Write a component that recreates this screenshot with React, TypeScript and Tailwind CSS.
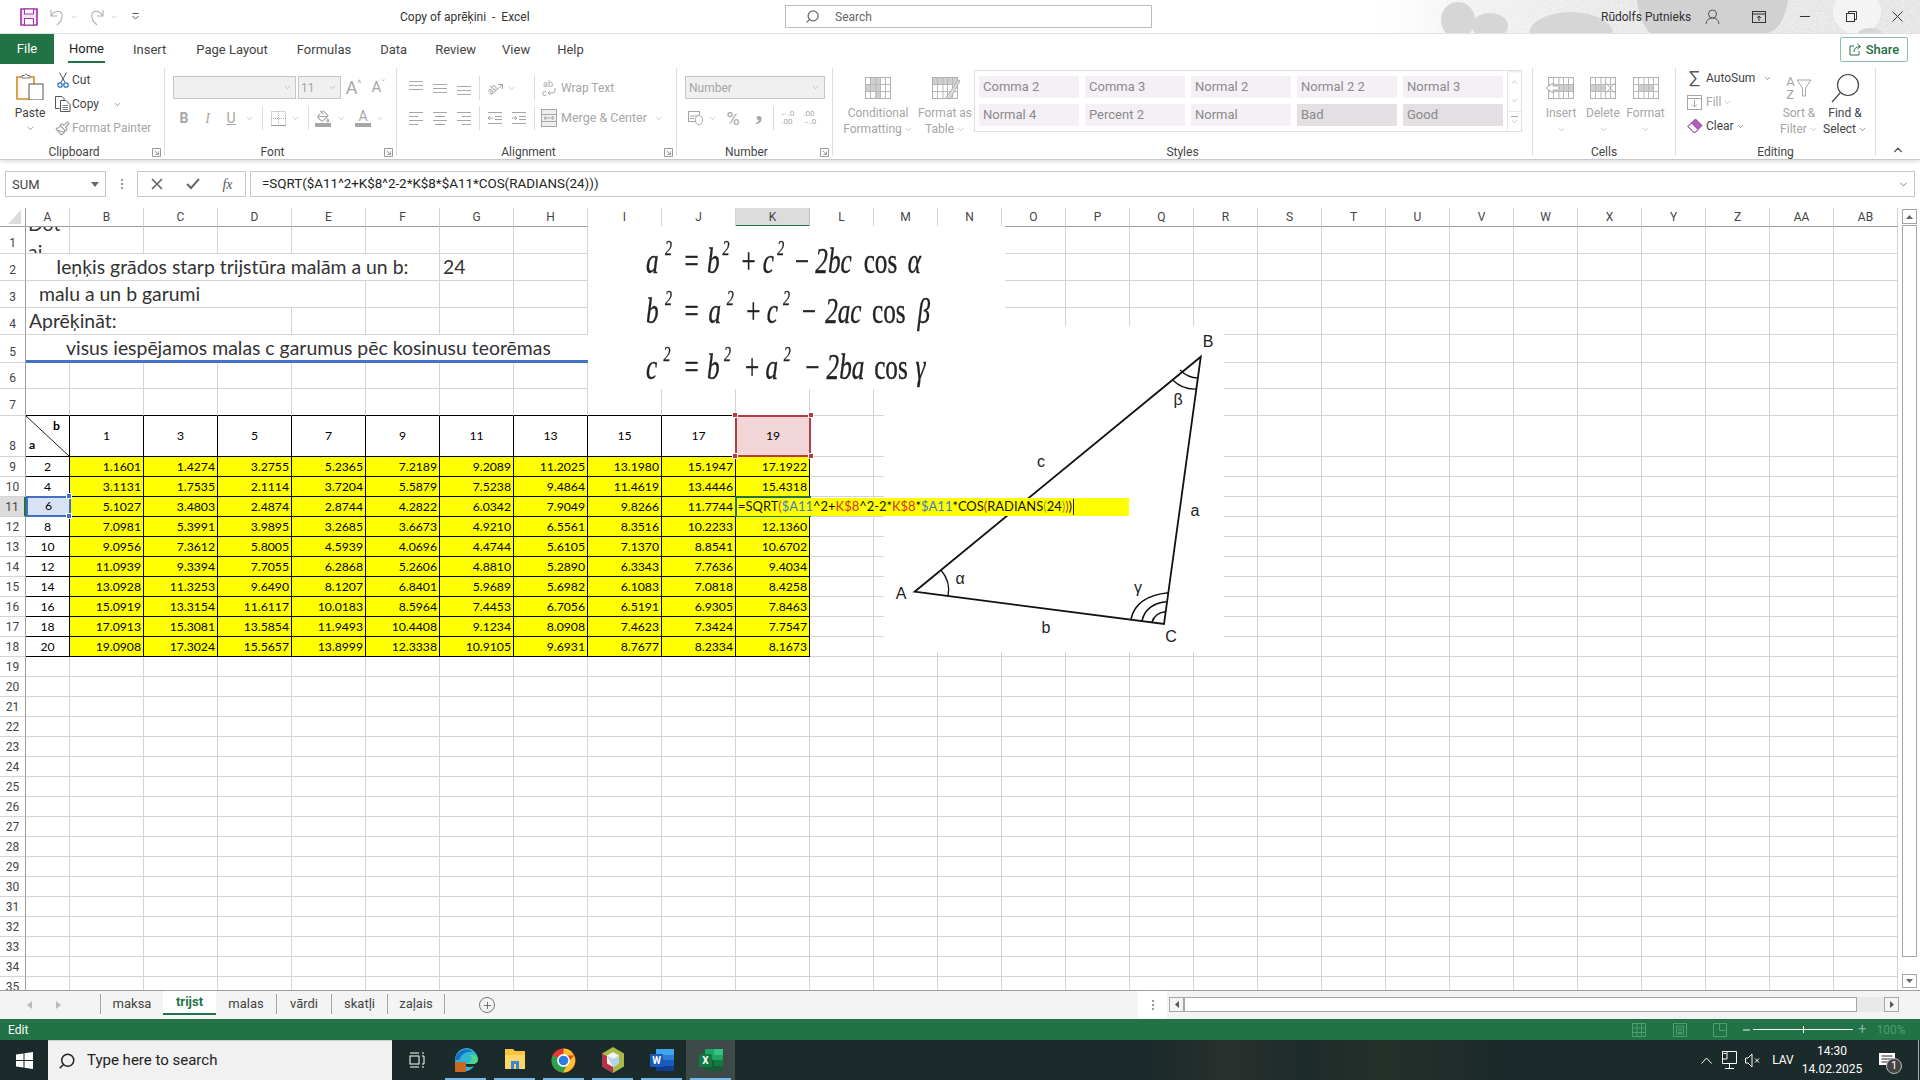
import React from "react";
import { ChevronDown, Paintbrush, PaintBucket, Search, Plus } from "lucide-react";

const G = "#a6a6a6";
const colNames = ["A","B","C","D","E","F","G","H","I","J","K","L","M","N","O","P","Q","R","S","T","U","V","W","X","Y","Z","AA","AB"];
const aVals = [2,4,6,8,10,12,14,16,18,20];
const data: string[][] = [
["1.1601","1.4274","3.2755","5.2365","7.2189","9.2089","11.2025","13.1980","15.1947","17.1922"],
["3.1131","1.7535","2.1114","3.7204","5.5879","7.5238","9.4864","11.4619","13.4446","15.4318"],
["5.1027","3.4803","2.4874","2.8744","4.2822","6.0342","7.9049","9.8266","11.7744",""],
["7.0981","5.3991","3.9895","3.2685","3.6673","4.9210","6.5561","8.3516","10.2233","12.1360"],
["9.0956","7.3612","5.8005","4.5939","4.0696","4.4744","5.6105","7.1370","8.8541","10.6702"],
["11.0939","9.3394","7.7055","6.2868","5.2606","4.8810","5.2890","6.3343","7.7636","9.4034"],
["13.0928","11.3253","9.6490","8.1207","6.8401","5.9689","5.6982","6.1083","7.0818","8.4258"],
["15.0919","13.3154","11.6117","10.0183","8.5964","7.4453","6.7056","6.5191","6.9305","7.8463"],
["17.0913","15.3081","13.5854","11.9493","10.4408","9.1234","8.0908","7.4623","7.3424","7.7547"],
["19.0908","17.3024","15.5657","13.8999","12.3338","10.9105","9.6931","8.7677","8.2334","8.1673"],
];
const heads = [1,3,5,7,9,11,13,15,17,19];

const Slot = ({ w, children, className = "" }: { w: string; children?: React.ReactNode; className?: string }) => (
  <div className={`${w} shrink-0 flex items-center justify-center h-full ${className}`}>{children}</div>
);
const Chev = ({ c = G, s = 9 }: { c?: string; s?: number }) => <ChevronDown size={s} color={c} strokeWidth={1.6} />;
const VSep = () => <div className="w-px h-[24px] bg-[#dcdcdc]" />;

function HLines({ ys, x1s, x2s }: { ys: number[]; x1s: number[]; x2s: number[] }) {
  return (
    <svg width="16" height="16" viewBox="0 0 16 16">
      {ys.map((y, i) => <line key={i} x1={x1s[i]} x2={x2s[i]} y1={y + 0.5} y2={y + 0.5} stroke={G} />)}
    </svg>
  );
}
const f3 = [1, 1, 1];
const t3 = [15, 15, 15];
const y4 = [2, 6, 10, 14];

function GridIcon({ fill, extra }: { fill: [number, number, number, number][]; extra?: React.ReactNode }) {
  return (
    <svg width="32" height="24" viewBox="0 0 32 24">
      {fill.map((f, i) => <rect key={i} x={f[0]} y={f[1]} width={f[2]} height={f[3]} fill="#cfcfcf" />)}
      <rect x="3.5" y="1.5" width="25" height="21" fill="none" stroke="#b0b0b0" />
      {[8, 13.5, 18, 23].map((x) => <line key={x} x1={x + 0.5} x2={x + 0.5} y1="1.5" y2="22.5" stroke="#b8b8b8" />)}
      {[8.5, 15.5].map((y) => <line key={y} x1="3.5" x2="28.5" y1={y} y2={y} stroke="#b8b8b8" />)}
      {extra}
    </svg>
  );
}

function Group({ w, label, launcher, children }: { w: string; label: string; launcher?: boolean; children: React.ReactNode }) {
  return (
    <div className={`${w} shrink-0 relative h-[88px] border-r border-[#dedede]`}>
      <div className="h-[78px] flex">{children}</div>
      <div className={`text-center text-[12px] leading-[12px] text-[#444] whitespace-nowrap ${launcher ? "pr-[16px]" : ""}`}>{label}</div>
      {launcher && (
        <svg className="absolute right-[3px] bottom-[-1px]" width="9" height="9" viewBox="0 0 9 9">
          <path d="M.5 .5H8.5V8.5H.5ZM2.5 2.5L6.5 6.5M6.5 3.5V6.5H3.5" fill="none" stroke="#9a9a9a" />
        </svg>
      )}
    </div>
  );
}

function BigBtn({ w, icon, l1, l2, dark, chevRow }: { w: string; icon: React.ReactNode; l1: string; l2?: string; dark?: boolean; chevRow?: boolean }) {
  const c = dark ? "text-[#444]" : "text-[#a6a6a6]";
  return (
    <div className={`${w} shrink-0 flex flex-col items-center pt-[5px]`}>
      <div className="h-[30px] flex items-center justify-center">{icon}</div>
      <div className={`mt-[2px] h-[16px] leading-[16px] text-[12px] whitespace-nowrap ${c}`}>{l1}</div>
      {chevRow ? (
        <div className="h-[16px] flex items-center"><Chev c={dark ? "#444" : G} /></div>
      ) : (
        <div className={`h-[16px] leading-[16px] text-[12px] whitespace-nowrap flex items-center gap-[2px] ${c}`}>{l2}<Chev c={dark ? "#444" : G} /></div>
      )}
    </div>
  );
}

const StyleItem = ({ t, dark }: { t: string; dark?: boolean }) => (
  <div className={`w-[100px] h-[22px] pl-[4px] flex items-center text-[13px] text-[#8a8a8a] ${dark ? "bg-[#e3dfe3]" : "bg-[#f5f0f6]"}`}>{t}</div>
);

function Ribbon() {
  return (
    <div className="h-[95px] flex pt-[3px] bg-white border-b border-[#c9c9c9] shadow-[0_2px_3px_rgba(0,0,0,0.12)] relative z-10 shrink-0">
      <Group w="w-[165px]" label="Clipboard" launcher>
        <div className="w-[52px] pl-[8px] flex flex-col items-center pt-[5px] shrink-0">
          <svg width="28" height="27" viewBox="0 0 28 27">
            <path d="M1 4H18V26H1Z" fill="#fff" stroke="#d88a1c" strokeWidth="1.6" />
            <path d="M6 5V2.5H8.5L10 .8L11.5 2.5H14V5Z" fill="#fff" stroke="#777" />
            <rect x="13" y="11" width="14" height="16" fill="#fff" stroke="#555" />
          </svg>
          <div className="mt-[5px] text-[12px] leading-[16px] text-[#444]">Paste</div>
          <div className="mt-[3px]"><Chev c="#555" /></div>
        </div>
        <div className="flex flex-col text-[12px] text-[#444]">
          <div className="h-[24px] flex items-center ml-[1px]">
            <Slot w="w-[19px]">
              <svg width="12" height="16" viewBox="0 0 12 16"><path d="M2.5 .5L8 10.5M9.5 .5L4 10.5" stroke="#555" fill="none" /><circle cx="3" cy="13" r="2.2" fill="none" stroke="#2b7cd3" strokeWidth="1.3" /><circle cx="9" cy="13" r="2.2" fill="none" stroke="#2b7cd3" strokeWidth="1.3" /></svg>
            </Slot>
            <span>Cut</span>
          </div>
          <div className="h-[24px] flex items-center ml-[1px]">
            <Slot w="w-[19px]">
              <svg width="16" height="16" viewBox="0 0 16 16"><path d="M4.5 12.5H.5V.5H7L9 2.5V4" fill="none" stroke="#555" /><path d="M5.5 4.5H11L15 8.5V15.5H5.5Z" fill="#fff" stroke="#555" /><path d="M7.5 9.5H13M7.5 11.5H13M7.5 13.5H13" stroke="#777" /></svg>
            </Slot>
            <span className="w-[41px]">Copy</span>
            <Chev c="#555" />
          </div>
          <div className="h-[24px] flex items-center ml-[1px] text-[#a6a6a6]">
            <Slot w="w-[19px]"><Paintbrush size={15} color={G} /></Slot>
            <span>Format Painter</span>
          </div>
        </div>
      </Group>

      <Group w="w-[232px]" label="Font" launcher>
        <div className="pl-[8px] pt-[8px] flex flex-col">
          <div className="flex items-center h-[23px]">
            <div className="w-[123px] h-[23px] bg-[#f0f0f0] border border-[#c6c6c6] flex items-center justify-end pr-[3px]"><Chev /></div>
            <div className="ml-[2px] w-[43px] h-[23px] bg-[#f0f0f0] border border-[#c6c6c6] flex items-center justify-between pl-[2px] pr-[3px] text-[12px] text-[#a6a6a6]">11<Chev /></div>
            <Slot w="w-[25px]" className="text-[18px] text-[#a6a6a6]"><span>A</span><span className="text-[9px] -mt-[8px]">^</span></Slot>
            <Slot w="w-[25px]" className="text-[15px] text-[#a6a6a6]"><span>A</span><span className="text-[9px] -mt-[6px]">ˇ</span></Slot>
          </div>
          <div className="flex h-[20px] mt-[9px] text-[#a6a6a6]">
            <Slot w="w-[22px]" className="font-bold text-[14px]">B</Slot>
            <Slot w="w-[25px]" className="italic text-[14px] [font-family:'Liberation_Serif',serif]">I</Slot>
            <Slot w="w-[22px]" className="underline text-[14px]">U</Slot>
            <Slot w="w-[14px]"><Chev /></Slot>
            <Slot w="w-[12px]"><VSep /></Slot>
            <Slot w="w-[20px]">
              <svg width="15" height="15" viewBox="0 0 15 15"><rect x=".5" y=".5" width="14" height="14" fill="none" stroke="#aaa" strokeDasharray="1 1" /><path d="M7.5 0V15M0 7.5H15" stroke="#aaa" strokeDasharray="1 1" /><path d="M0 14.5H15" stroke="#999" /></svg>
            </Slot>
            <Slot w="w-[14px]"><Chev /></Slot>
            <Slot w="w-[12px]"><VSep /></Slot>
            <Slot w="w-[18px]">
              <div className="flex flex-col items-center"><PaintBucket size={13} color={G} /><div className="w-[16px] h-[4px] bg-[#a6a6a6]" /></div>
            </Slot>
            <Slot w="w-[18px]"><Chev /></Slot>
            <Slot w="w-[26px]">
              <div className="flex flex-col items-center leading-[13px] text-[14px]">A<div className="w-[16px] h-[4px] bg-[#a6a6a6]" /></div>
            </Slot>
            <Slot w="w-[8px]"><Chev /></Slot>
          </div>
        </div>
      </Group>

      <Group w="w-[280px]" label="Alignment" launcher>
        <div className="pl-[7px] pt-[10px] flex flex-col">
          <div className="flex h-[20px]">
            <Slot w="w-[24px]"><HLines ys={[1, 5, 9]} x1s={f3} x2s={t3} /></Slot>
            <Slot w="w-[24px]"><HLines ys={[4, 8, 12]} x1s={f3} x2s={t3} /></Slot>
            <Slot w="w-[24px]"><HLines ys={[6, 10, 14]} x1s={f3} x2s={t3} /></Slot>
            <Slot w="w-[7px]"><VSep /></Slot>
            <Slot w="w-[24px]">
              <svg width="17" height="15" viewBox="0 0 17 15"><text x="0" y="11" fontSize="9" fill={G} transform="rotate(-45 5 8)" fontFamily="Roboto">ab</text><path d="M4 14L15 4M11 3.5H15.5V8" stroke={G} fill="none" /></svg>
            </Slot>
            <Slot w="w-[24px]" className="justify-start"><Chev /></Slot>
            <Slot w="w-[6px]"><VSep /></Slot>
            <Slot w="w-[24px]">
              <svg width="15" height="18" viewBox="0 0 15 18"><text x="1" y="8" fontSize="9" fill={G} fontFamily="Roboto">ab</text><text x="0" y="17" fontSize="9" fill={G} fontFamily="Roboto">c</text><path d="M13 9V11.5Q13 14 10 14H6M8 12L6 14L8 16" fill="none" stroke={G} /></svg>
            </Slot>
            <span className="text-[12px] leading-[20px] text-[#a6a6a6]">Wrap Text</span>
          </div>
          <div className="flex h-[20px] mt-[10px]">
            <Slot w="w-[24px]"><HLines ys={y4} x1s={[1, 1, 1, 1]} x2s={[15, 10, 15, 10]} /></Slot>
            <Slot w="w-[24px]"><HLines ys={y4} x1s={[1, 3, 1, 3]} x2s={[15, 13, 15, 13]} /></Slot>
            <Slot w="w-[24px]"><HLines ys={y4} x1s={[1, 6, 1, 6]} x2s={[15, 15, 15, 15]} /></Slot>
            <Slot w="w-[7px]"><VSep /></Slot>
            <Slot w="w-[24px]">
              <svg width="16" height="16" viewBox="0 0 16 16"><path d="M1 2.5H15M8 6.5H15M8 9.5H15M1 13.5H15M6 8H1M3 6L1 8L3 10" stroke={G} fill="none" /></svg>
            </Slot>
            <Slot w="w-[24px]">
              <svg width="16" height="16" viewBox="0 0 16 16"><path d="M1 2.5H15M8 6.5H15M8 9.5H15M1 13.5H15M1 8H6M4 6L6 8L4 10" stroke={G} fill="none" /></svg>
            </Slot>
            <Slot w="w-[6px]"><VSep /></Slot>
            <Slot w="w-[24px]">
              <svg width="16" height="18" viewBox="0 0 16 18"><rect x=".5" y=".5" width="15" height="17" fill="#eee" stroke={G} /><path d="M0 5.5H16M0 12.5H16M3 9H13M5 7L3 9L5 11M11 7L13 9L11 11" stroke={G} fill="none" /></svg>
            </Slot>
            <span className="w-[91px] text-[12.5px] leading-[20px] text-[#a6a6a6] whitespace-nowrap">Merge &amp; Center</span>
            <Slot w="w-[12px]"><Chev /></Slot>
          </div>
        </div>
      </Group>

      <Group w="w-[156px]" label="Number" launcher>
        <div className="pl-[8px] pt-[8px] flex flex-col">
          <div className="w-[140px] h-[23px] bg-[#f0f0f0] border border-[#c6c6c6] flex items-center justify-between pl-[3px] pr-[4px] text-[12px] text-[#a6a6a6]">Number<Chev /></div>
          <div className="flex h-[20px] mt-[9px] text-[#a6a6a6]">
            <Slot w="w-[22px]" className="ml-[-1px]">
              <svg width="15" height="14" viewBox="0 0 15 14"><rect x=".5" y=".5" width="11" height="10" fill="none" stroke={G} /><path d="M2 5H10M2 7.5H6" stroke={G} /><ellipse cx="11" cy="9" rx="3.5" ry="4.5" fill="#fff" stroke={G} /></svg>
            </Slot>
            <Slot w="w-[12px]"><Chev /></Slot>
            <Slot w="w-[30px]" className="text-[18px]">%</Slot>
            <Slot w="w-[22px]" className="text-[28px] font-bold leading-none [font-family:'Liberation_Serif',serif]"><span className="-mt-[14px]">,</span></Slot>
            <Slot w="w-[6px]"><VSep /></Slot>
            <Slot w="w-[22px]" className="flex-col text-[8px] leading-[8px]"><span>←.0</span><span>.00</span></Slot>
            <Slot w="w-[22px]" className="flex-col text-[8px] leading-[8px]"><span>.00</span><span>→.0</span></Slot>
          </div>
        </div>
      </Group>

      <Group w="w-[700px]" label="Styles">
        <div className="flex w-full">
          <BigBtn w="w-[74px] ml-[8px]" l1="Conditional" l2="Formatting" icon={<GridIcon fill={[[8, 2, 10, 7], [4, 9, 14, 6], [13, 15, 5, 7]]} />} />
          <BigBtn w="w-[60px]" l1="Format as" l2="Table" icon={<GridIcon fill={[[4, 2, 24, 6]]} extra={<path d="M17 22L29 4L31 5L21 23Z" fill="#ddd" stroke="#aaa" />} />} />
          <div className="ml-[-1px] mt-[2px] w-[548px] h-[62px] border border-[#e0e0e0] flex">
            <div className="pl-[4px] pt-[5px] grid grid-cols-[repeat(5,100px)] gap-x-[6px] gap-y-[6px] w-[532px] content-start">
              <StyleItem t="Comma 2" /><StyleItem t="Comma 3" /><StyleItem t="Normal 2" /><StyleItem t="Normal 2 2" /><StyleItem t="Normal 3" />
              <StyleItem t="Normal 4" /><StyleItem t="Percent 2" /><StyleItem t="Normal" /><StyleItem t="Bad" dark /><StyleItem t="Good" dark />
            </div>
            <div className="flex-1 flex flex-col border-l border-[#e6e6e6]">
              <div className="flex-1 flex items-center justify-center border-b border-[#e6e6e6] rotate-180"><Chev /></div>
              <div className="flex-1 flex items-center justify-center border-b border-[#e6e6e6]"><Chev /></div>
              <div className="flex-1 flex flex-col items-center justify-center"><div className="w-[7px] h-px bg-[#a6a6a6]" /><Chev /></div>
            </div>
          </div>
        </div>
      </Group>

      <Group w="w-[143px]" label="Cells">
        <div className="flex pl-[7px]">
          <BigBtn chevRow w="w-[42px]" l1="Insert" icon={<GridIcon fill={[[10, 8, 18, 8]]} extra={<path d="M1 12L8 7V10H14V14H8V17Z" fill="#fff" stroke="#b0b0b0" />} />} />
          <BigBtn chevRow w="w-[42px]" l1="Delete" icon={<GridIcon fill={[[4, 8, 14, 8]]} extra={<path d="M18 6L29 18M29 6L18 18" stroke="#b0b0b0" />} />} />
          <BigBtn chevRow w="w-[43px]" l1="Format" icon={<GridIcon fill={[[8, 8, 15, 8]]} />} />
        </div>
      </Group>

      <Group w="w-[200px]" label="Editing">
        <div className="flex pl-[11px]">
          <div className="w-[95px] flex flex-col text-[12px]">
            <div className="h-[24px] mt-[-2px] flex items-center text-[#444]">
              <span className="w-[19px] pl-[2px] text-[18px] text-[#555] leading-none">∑</span><span className="w-[57px]">AutoSum</span><Chev c="#555" />
            </div>
            <div className="h-[24px] flex items-center text-[#a6a6a6]">
              <Slot w="w-[19px]" className="justify-start"><svg width="15" height="15" viewBox="0 0 15 15"><rect x=".5" y=".5" width="14" height="14" fill="none" stroke={G} /><path d="M0 3.5H15M7.5 5V12M5 9.5L7.5 12L10 9.5" fill="none" stroke={G} /></svg></Slot>
              <span className="mr-[2px]">Fill</span><Chev />
            </div>
            <div className="h-[24px] flex items-center text-[#444]">
              <Slot w="w-[19px]" className="justify-start"><svg width="16" height="16" viewBox="0 0 16 16"><path d="M8.5 1L15 7.5L7.5 15L1 8.5Z" fill="#b55bc0" stroke="#8e3a9a" /><path d="M4.5 5L11 11.5L7.5 15L1 8.5Z" fill="#fff" stroke="#8e3a9a" /></svg></Slot>
              <span className="mr-[2px]">Clear</span><Chev c="#555" />
            </div>
          </div>
          <BigBtn w="w-[44px] ml-[-5px]" l1="Sort &" l2="Filter" icon={
            <div className="flex items-center gap-[1px]">
              <div className="flex flex-col text-[13px] leading-[13px] text-[#a6a6a6]"><span>A</span><span>Z</span></div>
              <svg width="16" height="18" viewBox="0 0 16 18"><path d="M1 1H15L9.5 9V17H6.5V9Z" fill="none" stroke={G} /></svg>
            </div>} />
          <BigBtn dark w="w-[48px]" l1="Find &" l2="Select" icon={
            <svg width="30" height="30" viewBox="0 0 30 30"><circle cx="18" cy="12" r="10.5" fill="none" stroke="#444" strokeWidth="1.2" /><path d="M10.5 19.5L2 29" stroke="#444" strokeWidth="1.2" /></svg>} />
        </div>
      </Group>
      <div className="flex-1 flex items-end justify-center pb-[2px]">
        <ChevronDown size={14} color="#555" className="rotate-180" />
      </div>
    </div>
  );
}

function TitleBar() {
  return (
    <div className="h-[34px] flex items-center bg-white border-b border-[#e1e1e1] relative shrink-0">
      <svg className="absolute right-0 top-0" width="560" height="33" viewBox="1360 0 560 33">
        <defs>
          <linearGradient id="fade" x1="0" x2="1" y1="0" y2="0"><stop offset="0" stopColor="#fff" /><stop offset="0.2" stopColor="#f0f0f0" /><stop offset="0.45" stopColor="#e6e6e6" /><stop offset="1" stopColor="#e2e2e2" /></linearGradient>
          <filter id="speck" x="0" y="0" width="100%" height="100%">
            <feTurbulence type="fractalNoise" baseFrequency="0.9" numOctaves="2" />
            <feColorMatrix values="0 0 0 0 1 0 0 0 0 1 0 0 0 0 1 0 0 0 3 -1.2" />
          </filter>
          <linearGradient id="wash" x1="0" x2="1" y1="0" y2="0"><stop offset="0" stopColor="#fff" stopOpacity="1" /><stop offset="0.16" stopColor="#fff" stopOpacity="0" /></linearGradient>
        </defs>
        <rect x="1360" width="560" height="33" fill="url(#fade)" />
        <rect x="1360" width="560" height="33" filter="url(#speck)" opacity="0.55" />
        <rect x="1360" width="560" height="33" fill="url(#wash)" />
        <ellipse cx="1458" cy="20" rx="17" ry="18" fill="#d6d6d6" />
        <ellipse cx="1490" cy="26" rx="18" ry="13" fill="#d6d6d6" />
        <ellipse cx="1571" cy="34" rx="42" ry="22" fill="#d6d6d6" />
        <path d="M1637 0H1788C1786 14 1780 30 1768 33H1650C1642 24 1638 12 1637 0Z" fill="#d1d1d1" />
        <ellipse cx="1857" cy="12" rx="24" ry="22" fill="#f4f4f4" />
        <ellipse cx="1870" cy="34" rx="12" ry="6" fill="#d6d6d6" />
      </svg>
      <Slot w="w-[20px] ml-[19px]" className="relative">
        <svg width="18" height="18" viewBox="0 0 18 18"><path d="M1 1H17V17H1Z" fill="#f5e5f6" stroke="#a33ba8" strokeWidth="1.7" /><rect x="4.5" y="1" width="9" height="5" fill="#fff" stroke="#a33ba8" /><rect x="4.5" y="10.5" width="9" height="6.5" fill="#fff" stroke="#a33ba8" /></svg>
      </Slot>
      <Slot w="w-[20px] ml-[9px]">
        <svg width="18" height="18" viewBox="0 0 18 18"><path d="M2 2V8H8M2 8Q6 2 10.5 3.5T12 13L8 17" fill="none" stroke="#b0b0b0" strokeWidth="1.1" /></svg>
      </Slot>
      <Slot w="w-[12px]"><Chev c="#b0b0b0" s={8} /></Slot>
      <Slot w="w-[20px] ml-[6px]">
        <svg width="18" height="18" viewBox="0 0 18 18"><path d="M16 2V8H10M16 8Q12 2 7.5 3.5T6 13L10 17" fill="none" stroke="#b0b0b0" strokeWidth="1.1" /></svg>
      </Slot>
      <Slot w="w-[12px] ml-[2px]"><Chev c="#b0b0b0" s={8} /></Slot>
      <Slot w="w-[14px] ml-[8px]">
        <svg width="9" height="9" viewBox="0 0 9 9"><path d="M1.5 1.5H7.5M1.5 4L4.5 7L7.5 4" fill="none" stroke="#555" /></svg>
      </Slot>
      <div className="ml-[258px] w-[130px] text-[12px] text-[#333] whitespace-pre relative">Copy of aprēķini  -  Excel</div>
      <div className="ml-[255px] w-[367px] h-[23px] border border-[#bdbdbd] bg-white flex items-center pl-[19px] text-[12px] text-[#666] relative">
        <Search size={15} color="#666" className="-scale-x-100" />
        <span className="ml-[15px]">Search</span>
      </div>
      <div className="ml-[449px] w-[88px] text-[12px] text-[#333] whitespace-nowrap relative">Rūdolfs Putnieks</div>
      <Slot w="w-[24px] ml-[11px]" className="relative">
        <svg width="15" height="15" viewBox="0 0 15 15"><circle cx="7.5" cy="5" r="4" fill="none" stroke="#555" /><path d="M1 15Q1.5 9 7.5 9T14 15" fill="none" stroke="#555" /></svg>
      </Slot>
      <Slot w="w-[24px] ml-[23px]" className="relative">
        <svg width="14" height="12" viewBox="0 0 14 12"><rect x=".5" y=".5" width="13" height="11" fill="none" stroke="#333" /><path d="M0 3H14M7 10V5M5 7L7 5L9 7" fill="none" stroke="#333" /></svg>
      </Slot>
      <Slot w="w-[24px] ml-[22px]" className="relative"><div className="w-[10px] h-px bg-[#333]" /></Slot>
      <Slot w="w-[24px] ml-[22px]" className="relative">
        <svg width="11" height="11" viewBox="0 0 11 11"><rect x=".5" y="2.5" width="8" height="8" fill="none" stroke="#333" /><path d="M2.5 2.5V.5H10.5V8.5H8.5" fill="none" stroke="#333" /></svg>
      </Slot>
      <Slot w="w-[24px] ml-[22px]" className="relative">
        <svg width="11" height="11" viewBox="0 0 11 11"><path d="M.5 .5L10.5 10.5M10.5 .5L.5 10.5" stroke="#333" /></svg>
      </Slot>
    </div>
  );
}

function Tabs() {
  const items: [string, string][] = [["Insert", "ml-[28px]"], ["Page Layout", "ml-[30px]"], ["Formulas", "ml-[29px]"], ["Data", "ml-[29px]"], ["Review", "ml-[28px]"], ["View", "ml-[26px]"], ["Help", "ml-[27px]"]];
  return (
    <div className="h-[31px] flex bg-white shrink-0 text-[13px] text-[#444]">
      <div className="w-[54px] h-[30px] bg-[#217346] text-white flex items-center justify-center">File</div>
      <div className="ml-[14px] h-[28px] w-[37px] border-b-2 border-[#217346] flex items-center justify-center text-[#222] mt-[1px] pt-[1px]">Home</div>
      {items.map(([t, m]) => <div key={t} className={`${m} h-[30px] pt-[2px] flex items-center whitespace-nowrap`}>{t}</div>)}
      <div className="ml-auto mr-[12px] mt-[3px] w-[68px] h-[25px] border border-[#8fc0a6] rounded-[2px] flex items-center justify-center gap-[4px] text-[#217346] font-medium">
        <svg width="13" height="13" viewBox="0 0 13 13"><path d="M5 3H1V12H10V8M5 9Q5 4 11 3.5M8.5 1L11.5 3.5L8.5 6" fill="none" stroke="#217346" /></svg>
        Share
      </div>
    </div>
  );
}

function FormulaBar() {
  return (
    <div className="h-[26px] mt-[11px] mb-[11px] flex shrink-0 text-[13px] text-[#444]">
      <div className="ml-[5px] w-[101px] border border-[#c6c6c6] flex items-center justify-between pl-[6px] pr-[6px] pt-[1px]">
        SUM
        <svg width="8" height="5" viewBox="0 0 8 5"><path d="M0 0H8L4 5Z" fill="#666" /></svg>
      </div>
      <div className="w-[31px] flex flex-col items-center justify-center gap-[2px]">
        <div className="w-[2px] h-[2px] bg-[#999]" /><div className="w-[2px] h-[2px] bg-[#999]" /><div className="w-[2px] h-[2px] bg-[#999]" />
      </div>
      <div className="w-[109px] border border-[#c6c6c6] flex items-center">
        <Slot w="w-[37px]"><svg width="12" height="12" viewBox="0 0 12 12"><path d="M1 1L11 11M11 1L1 11" stroke="#666" strokeWidth="1.7" /></svg></Slot>
        <Slot w="w-[35px]"><svg width="14" height="12" viewBox="0 0 14 12"><path d="M1 6L5 10L13 1" fill="none" stroke="#666" strokeWidth="1.9" /></svg></Slot>
        <Slot w="w-[35px]"><span className="italic text-[14px] [font-family:'Liberation_Serif',serif] text-[#555]">fx</span></Slot>
      </div>
      <div className="ml-[4px] w-[1665px] border border-[#c6c6c6] flex items-center pl-[11px] pr-[5px] pt-[1px] text-[13.4px] text-[#222] justify-between">
        <span>=SQRT($A11^2+K$8^2-2*K$8*$A11*COS(RADIANS(24)))</span>
        <Chev c="#555" s={11} />
      </div>
    </div>
  );
}

const S = "relative -top-[18px] text-[20px]";
const eqs: [string, string][][] = [
  [["a", ""], ["2", `${S} ml-[9px]`], ["=", "not-italic ml-[18px]"], ["b", "ml-[12px]"], ["2", `${S} ml-[4px]`], ["+", "not-italic ml-[17px]"], ["c", "ml-[10px]"], ["2", `${S} ml-[5px]`], ["−", "not-italic ml-[15px]"], ["2bc", "ml-[9px]"], ["cos", "not-italic ml-[17px]"], ["α", "ml-[15px]"]],
  [["b", ""], ["2", `${S} ml-[9px]`], ["=", "not-italic ml-[18px]"], ["a", "ml-[14px]"], ["2", `${S} ml-[8px]`], ["+", "not-italic ml-[18px]"], ["c", "ml-[9px]"], ["2", `${S} ml-[7px]`], ["−", "not-italic ml-[17px]"], ["2ac", "ml-[13px]"], ["cos", "not-italic ml-[15px]"], ["β", "ml-[17px]"]],
  [["c", ""], ["2", `${S} ml-[9px]`], ["=", "not-italic ml-[20px]"], ["b", "ml-[12px]"], ["2", `${S} ml-[6px]`], ["+", "not-italic ml-[20px]"], ["a", "ml-[9px]"], ["2", `${S} ml-[8px]`], ["−", "not-italic ml-[21px]"], ["2ba", "ml-[10px]"], ["cos", "not-italic ml-[14px]"], ["γ", "ml-[11px]"]],
];
const eqMargins = ["", "mt-[10px]", "mt-[16px]"];

const hdr = "flex items-center justify-center text-[12px] text-[#444] bg-white border-r border-b";
function Sheet() {
  const cells: React.ReactNode[] = [];
  cells.push(
    <div key="corner" className="bg-white border-r border-b border-[#9e9e9e] flex items-center justify-end pr-[4px]">
      <svg width="13" height="14" viewBox="0 0 13 14"><path d="M13 0V14H0Z" fill="#dcdcdc" /></svg>
    </div>
  );
  colNames.forEach((n, i) => {
    const sel = n === "K";
    const isKborder = sel ? "border-b-2 border-b-[#217346] border-r-[#c0c0c0]" : "border-b-[#9e9e9e] border-r-[#d4d4d4]";
    cells.push(<div key={"h" + i} className={`${hdr} ${isKborder} ${sel ? "!bg-[#dcdcdc]" : ""}`}>{n}</div>);
  });
  const grid = "border-r border-b border-[#d4d4d4]";
  for (let r = 1; r <= 35; r++) {
    cells.push(
      <div key={"r" + r} className={`flex ${r <= 8 ? "items-end pb-[1px]" : "items-center pt-[1px]"} justify-center text-[12px] text-[#444] border-r border-b border-r-[#9e9e9e] border-b-[#d4d4d4] ${r === 11 ? "bg-[#dcdcdc] !border-r-2 !border-r-[#217346]" : "bg-white"}`}>{r}</div>
    );
    const big = "[font-family:Lato,sans-serif] text-[19.4px] text-[#333] whitespace-nowrap flex items-center";
    let start = 0;
    if (r === 1) {
      cells.push(
        <div key="a1" className={`${grid} overflow-hidden pl-[2px] [font-family:Lato,sans-serif] text-[19.4px] text-[#333] leading-[24px]`}>
          <div className="-mt-[15px]">Dot</div>
          <div className="mt-[4px]">ai</div>
        </div>
      );
      start = 1;
    }
    if (r === 2) {
      cells.push(<div key="m2" className={`col-span-6 ${grid} ${big} pl-[30px]`}>Ieņķis grādos starp trijstūra malām a un b:</div>);
      cells.push(<div key="g2" className={`${grid} ${big} pl-[3px]`}>24</div>);
      start = 7;
    }
    if (r === 3) {
      cells.push(<div key="m3" className={`col-span-5 ${grid} ${big} pl-[13px]`}>malu a un b garumi</div>);
      start = 5;
    }
    if (r === 4) {
      cells.push(<div key="m4" className={`col-span-4 ${grid} ${big} pl-[3px]`}>Aprēķināt:</div>);
      start = 4;
    }
    if (r === 5) {
      cells.push(<div key="m5" className={`col-span-8 ${big} pl-[40px] border-b-[3px] border-b-[#4472c4]`}>visus iespējamos malas c garumus pēc kosinusu teorēmas</div>);
      start = 8;
    }
    for (let c = start; c < colNames.length; c++) {
      const k = `c${r}-${c}`;
      const num = "[font-family:Lato,sans-serif] text-[12.2px] text-black pt-[1px]";
      if (r === 7 && c <= 10) {
        cells.push(<div key={k} className="border-r border-r-[#d4d4d4] border-b border-b-black" />);
      } else if (r === 8 && c === 0) {
        cells.push(
          <div key={k} className={`relative border-r border-b border-black ${num} font-bold`}>
            <svg className="absolute inset-0" width="43" height="40" viewBox="0 0 43 40"><line x1="0" y1="0" x2="43" y2="40" stroke="#222" /></svg>
            <span className="absolute right-[9px] top-[1px]">b</span>
            <span className="absolute left-[3px] bottom-[2px]">a</span>
          </div>
        );
      } else if (r === 8 && c <= 10) {
        cells.push(<div key={k} className={`border-r border-b border-black flex items-center justify-center ${num}`}>{heads[c - 1]}</div>);
      } else if (r >= 9 && r <= 18 && c === 0) {
        cells.push(<div key={k} className={`border-r border-b border-black flex items-center justify-center ${num}`}>{aVals[r - 9]}</div>);
      } else if (r >= 9 && r <= 18 && c <= 10) {
        cells.push(<div key={k} className={`bg-[#ffff00] border-r border-b border-black flex items-center justify-end pr-[2px] ${num}`}>{data[r - 9][c - 1]}</div>);
      } else {
        cells.push(<div key={k} className={grid} />);
      }
    }
  }
  const handle = "absolute w-[6px] h-[6px] border border-white";
  return (
    <div className="flex h-[783px] shrink-0 border-b border-[#9e9e9e]">
      <div className="relative w-[1898px] h-[782px] overflow-hidden">
        <div className="grid grid-cols-[26px_44px_repeat(10,74px)_repeat(17,64px)] grid-rows-[19px_repeat(4,27px)_28px_26px_27px_41px_repeat(27,20px)]">
          {cells}
        </div>

        {/* triangle picture */}
        <svg className="absolute left-[884px] top-[118px] bg-white" width="340" height="326" viewBox="884 326 340 326">
          <path d="M914.6 591.7L1200.8 356.7L1164 624Z" fill="none" stroke="#111" strokeWidth="1.8" />
          <path d="M941 570Q951 582 948 596" fill="none" stroke="#111" strokeWidth="1.3" />
          <path d="M1180 370Q1188 378 1198 378M1172.6 380Q1183 390 1196.6 389" fill="none" stroke="#111" strokeWidth="1.3" />
          <path d="M1131 619Q1136 596 1168.4 592.7M1142 620.7Q1146 604 1166 601.7M1152 622Q1155 613 1165 611.7" fill="none" stroke="#111" strokeWidth="1.6" />
          <g fontFamily="Liberation Sans, sans-serif" fontSize="16" fill="#222" textAnchor="middle">
            <text x="1208" y="347">B</text>
            <text x="901" y="599">A</text>
            <text x="1171" y="642">C</text>
            <text x="1195" y="516">a</text>
            <text x="1046" y="633">b</text>
            <text x="1041" y="467">c</text>
            <text x="960" y="584">α</text>
            <text x="1178" y="405">β</text>
            <text x="1138" y="593">γ</text>
          </g>
        </svg>

        {/* formula picture */}
        <div className="absolute left-[588px] top-[18px] w-[417px] h-[163px] bg-white pl-[58px] pt-[15px] [font-family:'Liberation_Serif',serif] italic text-[#222] whitespace-nowrap [-webkit-text-stroke:0.35px_#222]">
          {eqs.map((line, i) => (
            <div key={i} className={`${eqMargins[i]} flex items-baseline h-[40px] leading-[40px] text-[36px] origin-left scale-x-[0.7] w-[440px]`}>
              {line.map(([t, cl], j) => <span key={j} className={cl}>{t}</span>)}
            </div>
          ))}
        </div>

        {/* K8 reference highlight */}
        <div className="absolute left-[735px] top-[207px] w-[76px] h-[42px] border-2 border-[#b83a45] bg-[#f2d6d8] flex items-center justify-center [font-family:Lato,sans-serif] text-[12.2px] text-black">19</div>
        <div className={`${handle} bg-[#b83a45] left-[732px] top-[204px]`} />
        <div className={`${handle} bg-[#b83a45] left-[808px] top-[204px]`} />
        <div className={`${handle} bg-[#b83a45] left-[732px] top-[245px]`} />
        <div className={`${handle} bg-[#b83a45] left-[808px] top-[245px]`} />

        {/* A11 reference highlight */}
        <div className="absolute left-[26px] top-[288px] w-[45px] h-[21px] border-2 border-[#3f6fc6] bg-[#d9e2f3] flex items-center justify-center [font-family:Lato,sans-serif] text-[12.2px] text-black">6</div>
        <div className={`${handle} bg-[#3f6fc6] left-[66px] top-[285px]`} />
        <div className={`${handle} bg-[#3f6fc6] left-[66px] top-[305px]`} />

        {/* active cell frame, then the in-cell editor that spills over its right edge */}
        <div className="absolute left-[735px] top-[288px] w-[76px] h-[21px] border-2 border-[#217346]" />
        <div className="absolute left-[737px] top-[290px] w-[392px] h-[18px] bg-[#ffff00] pl-[1px] flex items-center [font-family:Lato,sans-serif] text-[12.95px] text-[#111] whitespace-nowrap">
          <span>=SQRT</span><span className="text-[#c0392b]">(</span><span className="text-[#3d7cc4]">$A11</span><span>^2+</span><span className="text-[#d0342c]">K$8</span><span>^2-2*</span><span className="text-[#d0342c]">K$8</span><span>*</span><span className="text-[#3d7cc4]">$A11</span><span>*COS</span><span className="text-[#c0392b]">(</span><span>RADIANS</span><span className="text-[#a3a300]">(</span><span>24</span><span className="text-[#a3a300]">)</span><span className="text-[#c0392b]">)</span><span>)</span>
          <span className="w-px h-[16px] bg-[#222] ml-[1px]" />
        </div>
      </div>

      <div className="w-[22px] pl-[4px] flex flex-col bg-white">
        <div className="mt-[1px] w-[15px] h-[15px] border border-[#a6a6a6] flex items-center justify-center">
          <svg width="7" height="4" viewBox="0 0 7 4"><path d="M0 4H7L3.5 0Z" fill="#666" /></svg>
        </div>
        <div className="mt-px w-[15px] h-[732px] border border-[#a6a6a6] bg-white" />
        <div className="mt-[17px] w-[15px] h-[14px] border border-[#a6a6a6] flex items-center justify-center">
          <svg width="7" height="4" viewBox="0 0 7 4"><path d="M0 0H7L3.5 4Z" fill="#666" /></svg>
        </div>
      </div>
    </div>
  );
}

function SheetTabs() {
  const Tab = ({ t, w }: { t: string; w: string }) => (
    <div className={`${w} h-[20px] mt-[3px] border-r border-[#a6a6a6] flex items-center justify-center whitespace-nowrap text-[#444]`}>{t}</div>
  );
  return (
    <div className="h-[28px] bg-[#f4f4f4] flex text-[13px] shrink-0">
      <div className="w-[101px] h-full flex border-r-0 relative">
        <Slot w="w-[14px] ml-[22px]"><svg width="5" height="8" viewBox="0 0 5 8"><path d="M5 0V8L0 4Z" fill="#bbb" /></svg></Slot>
        <Slot w="w-[14px] ml-[15px]"><svg width="5" height="8" viewBox="0 0 5 8"><path d="M0 0V8L5 4Z" fill="#bbb" /></svg></Slot>
        <div className="absolute right-0 top-[3px] h-[20px] w-px bg-[#a6a6a6]" />
      </div>
      <div className="w-[62px] h-[20px] mt-[3px] flex items-center justify-center text-[#444]">maksa</div>
      <div className="w-[53px] h-[24px] bg-white border-b-2 border-[#217346] flex items-center justify-center font-bold text-[#217346]">trijst</div>
      <Tab t="malas" w="w-[61px]" />
      <Tab t="vārdi" w="w-[55px]" />
      <Tab t="skatļi" w="w-[56px]" />
      <Tab t="zaļais" w="w-[57px]" />
      <Slot w="w-[16px] ml-[34px]">
        <div className="w-[16px] h-[16px] rounded-full border border-[#777] flex items-center justify-center"><Plus size={11} color="#666" /></div>
      </Slot>
      <div className="ml-[643px] w-[29px] h-full bg-white flex flex-col items-center justify-center gap-[2px]">
        <div className="w-[2px] h-[2px] bg-[#999]" /><div className="w-[2px] h-[2px] bg-[#999]" /><div className="w-[2px] h-[2px] bg-[#999]" />
      </div>
      <div className="ml-[2px] mt-[6px] flex h-[15px]">
        <div className="w-[15px] border border-[#a6a6a6] flex items-center justify-center"><svg width="4" height="7" viewBox="0 0 4 7"><path d="M4 0V7L0 3.5Z" fill="#555" /></svg></div>
        <div className="w-[673px] bg-white border border-[#a6a6a6]" />
        <div className="w-[27px] bg-[#e9e9e9]" />
        <div className="w-[15px] border border-[#a6a6a6] flex items-center justify-center"><svg width="4" height="7" viewBox="0 0 4 7"><path d="M0 0V7L4 3.5Z" fill="#555" /></svg></div>
      </div>
    </div>
  );
}

function StatusBar() {
  const d = "#4f9d72";
  return (
    <div className="h-[21px] bg-[#217346] flex items-center text-[12px] text-white shrink-0">
      <span className="ml-[8px] w-[1624px]">Edit</span>
      <Slot w="w-[14px]"><svg width="14" height="14" viewBox="0 0 14 14"><path d="M.5 .5H13.5V13.5H.5ZM.5 5H13.5M.5 9.5H13.5M5 .5V13.5M9.5 .5V13.5" fill="none" stroke={d} /></svg></Slot>
      <Slot w="w-[14px] ml-[27px]"><svg width="14" height="14" viewBox="0 0 14 14"><path d="M.5 .5H13.5V13.5H.5ZM3.5 3H10.5V11H3.5ZM5 5.5H9M5 7.5H9M5 9.5H9" fill="none" stroke={d} /></svg></Slot>
      <Slot w="w-[14px] ml-[26px]"><svg width="14" height="14" viewBox="0 0 14 14"><path d="M.5 .5H13.5V13.5H.5ZM6.5 .5V7.5H13.5" fill="none" stroke={d} /></svg></Slot>
      <div className="ml-[16px] w-[7px] h-[2px] bg-[#7fb79a]" />
      <div className="ml-[3px] w-[100px] h-px bg-white relative"><div className="absolute left-[50px] -top-[3px] w-px h-[7px] bg-white" /></div>
      <div className="ml-[5px] text-[15px] leading-none text-[#7fb79a]">+</div>
      <div className="ml-[10px] text-[#4f9d72] text-[12px]">100%</div>
    </div>
  );
}

function Taskbar() {
  const bar = "absolute bottom-0 left-[4px] right-[4px] h-[2px] bg-[#76b9ed]";
  return (
    <div className="h-[40px] flex bg-[linear-gradient(90deg,#1b2a2a_0%,#1b2a2a_60%,#2a302d_64%,#1d2b2a_68%,#26302a_72%,#1b2a2a_78%,#1b2a2a_100%)] text-white shrink-0">
      <Slot w="w-[48px]">
        <svg width="17" height="17" viewBox="0 0 17 17"><path d="M0 2.5L7.5 1.4V8H0ZM8.5 1.3L17 0V8H8.5ZM0 9H7.5V15.6L0 14.5ZM8.5 9H17V17L8.5 15.7Z" fill="#fff" /></svg>
      </Slot>
      <div className="w-[344px] h-full bg-[#f1f1f1] border-t border-[#d0d0d0] flex items-center text-[#222] text-[15px]">
        <Search size={18} color="#222" className="ml-[10px] -scale-x-100" />
        <span className="ml-[11px]">Type here to search</span>
      </div>
      <Slot w="w-[49px]">
        <svg width="16" height="16" viewBox="0 0 16 16"><rect x="1" y="4" width="9" height="8" fill="none" stroke="#fff" /><path d="M1 1H10M1 15H10M13 1H15M13 15H15M13 4H15V12H13" fill="none" stroke="#fff" /></svg>
      </Slot>
      <Slot w="w-[49px]" className="relative">
        <svg width="26" height="26" viewBox="0 0 26 26"><path d="M13 1A12 12 0 0 1 25 12Q25 17 19 17H10Q11 20 16 20Q19 20 21 19Q17 25 11 24Q2 22 2 13A12 12 0 0 1 13 1Z" fill="#2fb5d6" /><path d="M2 13A11 11 0 0 1 20 5Q10 3 6 13Z" fill="#1a6fc4" /><path d="M25 12Q25 17 19 17H14Q21 14 17 8Q24 7 25 12Z" fill="#52d58b" /><rect x="2" y="15" width="11" height="10" rx="1" fill="#c8691e" /></svg>
        <div className={bar} />
      </Slot>
      <Slot w="w-[49px]" className="relative">
        <svg width="22" height="24" viewBox="0 0 22 24"><path d="M1 1H9L11 3H21V21H1Z" fill="#f7c53e" /><path d="M1 7H21V21H1Z" fill="#fbd669" /><path d="M7 13H15V21H12V16H10V21H7Z" fill="#3a86d6" /></svg>
        <div className={bar} />
      </Slot>
      <Slot w="w-[49px]" className="relative">
        <svg width="25" height="25" viewBox="0 0 25 25"><circle cx="12.5" cy="12.5" r="12" fill="#e33b2e" /><path d="M1.7 7.5A12 12 0 0 0 12 24.5L17.5 15Z" fill="#2ba24c" /><path d="M12.5 .5A12 12 0 0 1 23.2 7.5H12.5ZM23.2 7.5A12 12 0 0 1 12 24.5L18 13Z" fill="#fbc02d" /><circle cx="12.5" cy="12.5" r="5.6" fill="#2a7de1" stroke="#fff" strokeWidth="1.6" /></svg>
        <div className={bar} />
      </Slot>
      <Slot w="w-[49px]" className="relative">
        <svg width="22" height="26" viewBox="0 0 22 26"><path d="M11 0L22 6.5V19.5L11 26L0 19.5V6.5Z" fill="#a8b94a" /><path d="M0 6.5V19.5L11 26V13Z" fill="#b8324a" /><path d="M5 8.5L11 5L17 8.5V16.5L11 20L5 16.5Z" fill="#f2f2f2" /><path d="M5 8.5L11 12L17 8.5V16.5L11 20Z" fill="#b7d3ea" /></svg>
        <div className={bar} />
      </Slot>
      <Slot w="w-[49px]" className="relative">
        <svg width="24" height="24" viewBox="0 0 24 24"><rect x="6" y="1" width="18" height="22" rx="1" fill="#2b7cd3" /><rect x="6" y="1" width="18" height="6" fill="#41a5ee" /><rect x="6" y="12" width="18" height="6" fill="#185abd" /><rect x="6" y="18" width="18" height="5" fill="#103f91" /><rect x="0" y="6" width="13" height="13" rx="1" fill="#185abd" /><text x="6.5" y="16" fontSize="10" fontWeight="700" fill="#fff" textAnchor="middle" fontFamily="Roboto">W</text></svg>
        <div className={bar} />
      </Slot>
      <Slot w="w-[49px]" className="relative bg-[#3d4a48]">
        <svg width="24" height="24" viewBox="0 0 24 24"><rect x="6" y="1" width="18" height="22" rx="1" fill="#21a366" /><rect x="15" y="1" width="9" height="6" fill="#33c481" /><rect x="6" y="12" width="18" height="11" fill="#185c37" /><rect x="15" y="12" width="9" height="6" fill="#107c41" /><rect x="0" y="6" width="13" height="13" rx="1" fill="#107c41" /><text x="6.5" y="16" fontSize="10" fontWeight="700" fill="#fff" textAnchor="middle" fontFamily="Roboto">X</text></svg>
        <div className={bar} />
      </Slot>
      <div className="ml-auto flex items-center">
        <Slot w="w-[14px]"><svg width="11" height="7" viewBox="0 0 11 7"><path d="M.5 6.5L5.5 1L10.5 6.5" fill="none" stroke="#fff" /></svg></Slot>
        <Slot w="w-[18px] ml-[7px]"><svg width="15" height="18" viewBox="0 0 15 18"><path d="M.5 .5H14.5V12.5H.5ZM7.5 13V17M3 17.5H12M.5 .5H5V8H.5M1.5 2.5H4" fill="none" stroke="#fff" /></svg></Slot>
        <Slot w="w-[16px] ml-[6px]"><svg width="15" height="15" viewBox="0 0 15 15"><path d="M.5 5H3L7 1V14L3 10H.5ZM10 5.5L14 9.5M14 5.5L10 9.5" fill="none" stroke="#fff" /></svg></Slot>
        <div className="ml-[8px] w-[30px] text-center text-[12px]">LAV</div>
        <div className="ml-[3px] w-[62px] flex flex-col items-center text-[12px] leading-[18px]"><span>14:30</span><span>14.02.2025</span></div>
        <Slot w="w-[18px] ml-[15px]" className="relative">
          <svg width="16" height="16" viewBox="0 0 16 16"><path d="M0 1H16V13H11V16L8 13H0Z" fill="#fff" /><path d="M2.5 4H13.5M2.5 7H13.5M2.5 10H13.5" stroke="#222" /></svg>
          <div className="absolute left-[8px] top-[18px] w-[16px] h-[16px] rounded-full bg-[#444] border border-[#bbb] flex items-center justify-center text-[11px] text-white">1</div>
        </Slot>
        <div className="w-[2px] h-full ml-[22px] border-l border-[#aaa]" />
      </div>
    </div>
  );
}

export default function App() {
  return (
    <div className="w-[1920px] h-[1080px] overflow-hidden flex flex-col bg-white [font-family:Roboto,sans-serif]">
      <TitleBar />
      <Tabs />
      <Ribbon />
      <FormulaBar />
      <Sheet />
      <SheetTabs />
      <StatusBar />
      <Taskbar />
    </div>
  );
}
